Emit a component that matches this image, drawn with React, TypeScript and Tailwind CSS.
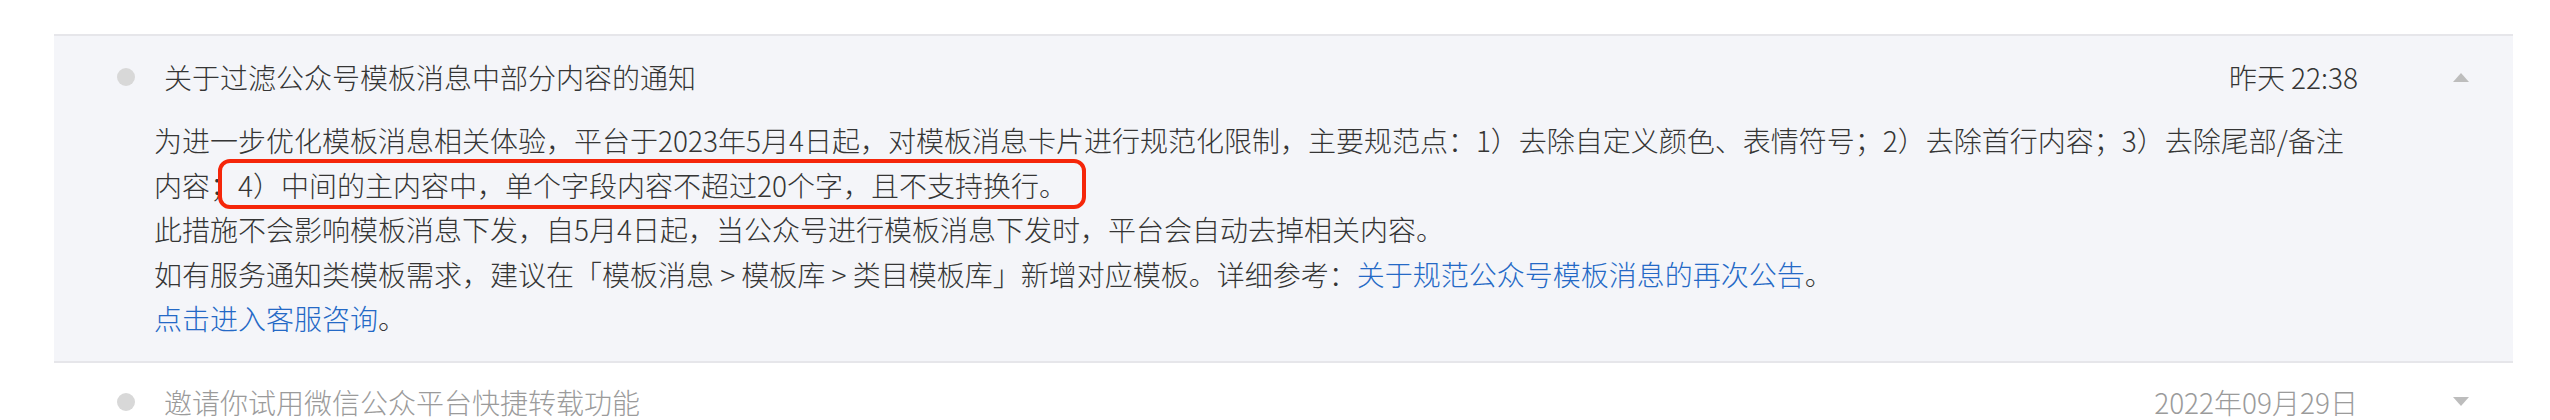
import React from 'react';

const FONT = { fontFamily: '"Noto Sans CJK SC", "PingFang SC", sans-serif' };

function Caret({ up }: { up?: boolean }) {
  return (
    <svg width="16" height="9" viewBox="0 0 16 9" className="shrink-0">
      {up ? <polygon points="8,0 16,9 0,9" fill="#bdbdbd" /> : <polygon points="0,0 16,0 8,9" fill="#bdbdbd" />}
    </svg>
  );
}

function Link({ children }: { children: React.ReactNode }) {
  return <a className="text-[#2469c6] no-underline cursor-pointer">{children}</a>;
}

export default function App() {
  return (
    <div className="w-full h-[420px] bg-white pt-[34px] pl-[54px] pr-[37px] overflow-hidden font-light" style={FONT}>
      {/* expanded notice */}
      <div className="border-t-2 border-b-2 border-[#e6e6ea] bg-[#f4f5f9]">
        <div className="h-[82px] flex items-center pl-[63px] pr-[44px]">
          <span className="w-[18px] h-[18px] rounded-full bg-[#d8d8d8] shrink-0" />
          <span className="ml-[29px] flex-1 text-[28px] text-[#353535]">关于过滤公众号模板消息中部分内容的通知</span>
          <span className="text-[28px] text-[#353535]">昨天 22:38</span>
          <span className="ml-[95px]">
            <Caret up />
          </span>
        </div>
        <div className="pl-[100px] pr-[146px] pb-[20px] text-[28px] leading-[44.5px] text-[#353535]">
          <p>
            为进一步优化模板消息相关体验，平台于2023年5月4日起，对模板消息卡片进行规范化限制，主要规范点：1）去除自定义颜色、表情符号；2）去除首行内容；3）去除尾部/备注内容；
            <span className="relative">
              4）中间的主内容中，单个字段内容不超过20个字，且不支持换行。
              <span className="absolute -left-[20px] -right-[19px] -top-[6px] -bottom-[4px] border-4 border-[#f5260a] rounded-[12px] pointer-events-none" />
            </span>
          </p>
          <p>此措施不会影响模板消息下发，自5月4日起，当公众号进行模板消息下发时，平台会自动去掉相关内容。</p>
          <p>
            如有服务通知类模板需求，建议在「模板消息 &gt; 模板库 &gt; 类目模板库」新增对应模板。详细参考：
            <Link>关于规范公众号模板消息的再次公告</Link>。
          </p>
          <p>
            <Link>点击进入客服咨询</Link>。
          </p>
        </div>
      </div>

      {/* collapsed notice */}
      <div className="h-[78px] flex items-center pl-[63px] pr-[44px]">
        <span className="w-[18px] h-[18px] rounded-full bg-[#d8d8d8] shrink-0" />
        <span className="ml-[29px] flex-1 text-[28px] text-[#9b9b9b]">邀请你试用微信公众平台快捷转载功能</span>
        <span className="text-[28px] text-[#9b9b9b]">2022年09月29日</span>
        <span className="ml-[95px]">
          <Caret />
        </span>
      </div>
    </div>
  );
}
